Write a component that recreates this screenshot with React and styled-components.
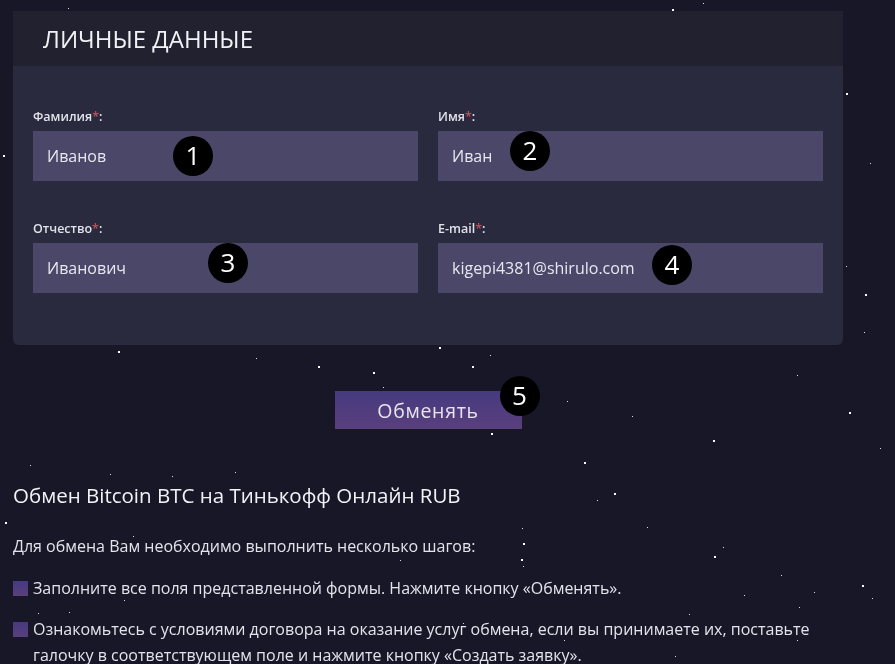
import React from "react";
import styled, { createGlobalStyle } from "styled-components";

const GlobalStyle = createGlobalStyle`
  html, body { margin: 0; padding: 0; background: #181727; }
  body { font-family: "Open Sans", "Noto Sans", sans-serif; color: #e4e3ec; }
  * { box-sizing: border-box; }
`;

const STARS = [
  [68, 8, 1], [3, 155, 2], [672, 9, 2], [703, 3, 1], [846, 93, 2], [870, 163, 1],
  [846, 266, 1], [865, 294, 2], [864, 332, 1], [439, 347, 2], [490, 355, 1],
  [118, 351, 2], [256, 358, 1], [318, 366, 2], [373, 372, 2], [472, 366, 2],
  [383, 387, 1], [491, 433, 2], [567, 401, 1], [632, 416, 1], [797, 375, 1],
  [849, 412, 2], [713, 440, 2], [880, 448, 1], [30, 465, 1], [110, 474, 1],
  [172, 476, 1], [235, 472, 1], [5, 522, 2], [584, 462, 2], [597, 500, 1],
  [614, 493, 2], [522, 528, 1], [647, 527, 1], [523, 543, 2], [723, 547, 1],
  [714, 556, 2], [521, 559, 2], [523, 566, 1], [781, 575, 1], [814, 592, 1],
  [862, 585, 2], [744, 595, 1], [872, 598, 1], [799, 607, 1], [463, 623, 1],
  [689, 614, 1], [564, 640, 1], [797, 640, 1], [675, 656, 1], [205, 127, 1],
  [133, 536, 1], [69, 612, 1], [38, 613, 1], [124, 600, 1], [400, 560, 1],
];

const Sky = styled.svg`
  position: fixed;
  left: 0;
  top: 0;
  width: 895px;
  height: 664px;
  z-index: 0;
  pointer-events: none;
`;

const Page = styled.div`
  position: relative;
  z-index: 1;
  width: 895px;
  min-height: 664px;
  padding: 11px 52px 0 13px;
`;

const Card = styled.section`
  width: 830px;
  background: #292a3e;
  border-radius: 0 0 6px 6px;
`;

const CardHeader = styled.header`
  height: 55px;
  background: #22212f;
  display: flex;
  align-items: center;
  padding: 0 30px;
`;

const CardTitle = styled.h2`
  margin: 0;
  font-size: 24px;
  font-weight: 400;
  color: #f2f2f6;
`;

const CardBody = styled.div`
  display: grid;
  grid-template-columns: 385px 385px;
  column-gap: 20px;
  row-gap: 40px;
  padding: 43px 20px 52px;
`;

const Field = styled.div`
  display: flex;
  flex-direction: column;
  gap: 6px;
`;

const Label = styled.label`
  font-size: 12.5px;
  font-weight: 600;
  line-height: 16px;
  color: #e2e2ea;
`;

const Req = styled.span`
  color: #c2505c;
`;

const InputBox = styled.div`
  position: relative;
  height: 50px;
  background: #4a4769;
  display: flex;
  align-items: center;
  padding: 0 14px;
  font-size: 16px;
  color: #e8e7f0;
`;

const Badge = styled.span`
  position: absolute;
  left: ${(p) => p.$x}px;
  top: ${(p) => p.$y}px;
  width: 40px;
  height: 40px;
  border-radius: 50%;
  background: #000;
  color: #fff;
  display: flex;
  align-items: center;
  justify-content: center;
  font-size: 26px;
  line-height: 1;
  font-family: "Open Sans", sans-serif;
  letter-spacing: 0;
  padding-bottom: 2px;
`;

const ButtonRow = styled.div`
  width: 830px;
  display: flex;
  justify-content: center;
  margin-top: 46px;
`;

const ExchangeButton = styled.button`
  position: relative;
  width: 187px;
  height: 38px;
  border: 0;
  background: linear-gradient(180deg, #463a80 0%, #5a3f7c 100%);
  color: #e6e4ee;
  font-family: "Open Sans", sans-serif;
  font-size: 19.5px;
  letter-spacing: 0.7px;
  cursor: pointer;
  padding: 0;
`;

const Info = styled.div`
  margin-top: 52px;
`;

const Heading = styled.h3`
  margin: 0;
  font-size: 20.5px;
  font-weight: 400;
  color: #f2f2f6;
  line-height: 28px;
`;

const Lead = styled.p`
  margin: 24px 0 0;
  font-size: 16px;
  line-height: 26px;
  color: #e4e3ec;
`;

const Steps = styled.ul`
  list-style: none;
  margin: 16px 0 0;
  padding: 0;
  display: flex;
  flex-direction: column;
  gap: 15px;
`;

const Step = styled.li`
  display: flex;
  gap: 5px;
  font-size: 16px;
  line-height: 26px;
  color: #e4e3ec;
  width: 830px;
`;

const Bullet = styled.span`
  flex: 0 0 15px;
  width: 15px;
  height: 15px;
  margin-top: 6px;
  background: linear-gradient(180deg, #463a80 0%, #5a3f7c 100%);
`;

const fields = [
  { label: "Фамилия", value: "Иванов", n: 1, x: 140, y: 5 },
  { label: "Имя", value: "Иван", n: 2, x: 72, y: 0 },
  { label: "Отчество", value: "Иванович", n: 3, x: 175, y: 0 },
  { label: "E-mail", value: "kigepi4381@shirulo.com", n: 4, x: 214, y: 2 },
];

export default function App() {
  return (
    <>
      <GlobalStyle />
      <Sky viewBox="0 0 895 664" aria-hidden="true">
        {STARS.map(([x, y, s], i) => (
          <rect key={i} x={x} y={y} width={s} height={s} fill="#fff" opacity={s > 1 ? 1 : 0.85} />
        ))}
      </Sky>
      <Page>
        <Card>
          <CardHeader>
            <CardTitle>ЛИЧНЫЕ ДАННЫЕ</CardTitle>
          </CardHeader>
          <CardBody>
            {fields.map((f) => (
              <Field key={f.n}>
                <Label>
                  {f.label}
                  <Req>*</Req>:
                </Label>
                <InputBox>
                  {f.value}
                  <Badge $x={f.x} $y={f.y}>{f.n}</Badge>
                </InputBox>
              </Field>
            ))}
          </CardBody>
        </Card>
        <ButtonRow>
          <ExchangeButton>
            Обменять
            <Badge $x={165} $y={-15}>5</Badge>
          </ExchangeButton>
        </ButtonRow>
        <Info>
          <Heading>Обмен Bitcoin BTC на Тинькофф Онлайн RUB</Heading>
          <Lead>Для обмена Вам необходимо выполнить несколько шагов:</Lead>
          <Steps>
            <Step>
              <Bullet />
              <span>Заполните все поля представленной формы. Нажмите кнопку «Обменять».</span>
            </Step>
            <Step>
              <Bullet />
              <span>
                Ознакомьтесь с условиями договора на оказание услуг обмена, если вы принимаете их, поставьте
                галочку в соответствующем поле и нажмите кнопку «Создать заявку».
              </span>
            </Step>
          </Steps>
        </Info>
      </Page>
    </>
  );
}
